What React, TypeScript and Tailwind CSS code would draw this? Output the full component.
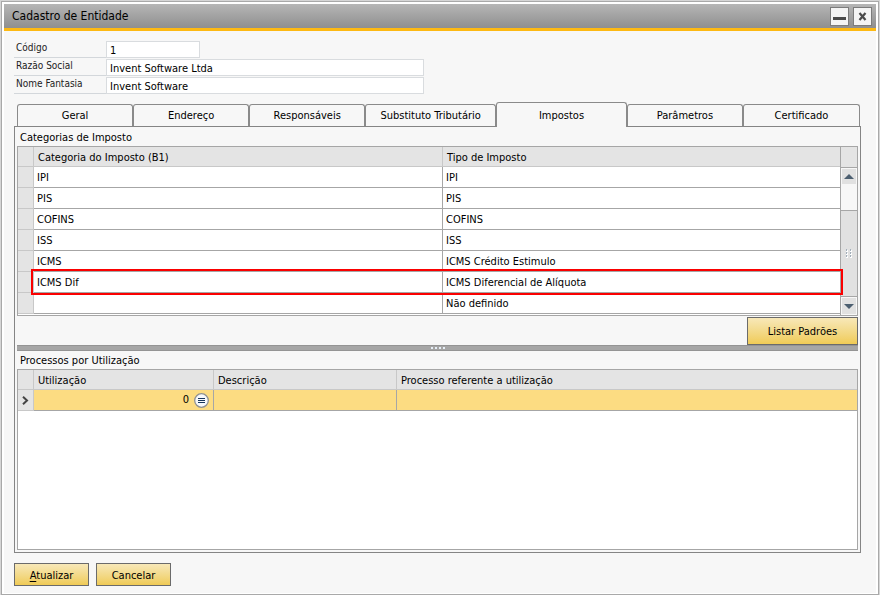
import React, { useState } from 'react';
import clsx from 'clsx';

const tabs = [
  { id: 'geral', label: 'Geral', width: 'grow-[116]' },
  { id: 'endereco', label: 'Endereço', width: 'grow-[116]' },
  { id: 'responsaveis', label: 'Responsáveis', width: 'grow-[116]' },
  { id: 'substituto', label: 'Substituto Tributário', width: 'grow-[131]' },
  { id: 'impostos', label: 'Impostos', width: 'grow-[131]' },
  { id: 'parametros', label: 'Parâmetros', width: 'grow-[116]' },
  { id: 'certificado', label: 'Certificado', width: 'grow-[117]' },
];

const categorias = [
  { categoria: 'IPI', tipo: 'IPI' },
  { categoria: 'PIS', tipo: 'PIS' },
  { categoria: 'COFINS', tipo: 'COFINS' },
  { categoria: 'ISS', tipo: 'ISS' },
  { categoria: 'ICMS', tipo: 'ICMS Crédito Estimulo' },
  { categoria: 'ICMS Dif', tipo: 'ICMS Diferencial de Alíquota', destaque: true },
  { categoria: '', tipo: 'Não definido' },
];

const campos = [
  { id: 'codigo', label: 'Código', value: '1', width: 'w-[94px]' },
  { id: 'razao', label: 'Razão Social', value: 'Invent Software Ltda', width: 'w-[318px]' },
  { id: 'fantasia', label: 'Nome Fantasia', value: 'Invent Software', width: 'w-[318px]' },
];

const goldButton =
  'border border-[#6b6b6b] bg-gradient-to-b from-[#f8e8b8] via-[#f3da8a] to-[#f0cb55] text-center';
const headCell = 'h-5 border-b border-[#c8c8c8] bg-[#e4e4e4] px-1 pt-0.5 pb-0 text-left font-normal';

function ScrollBar() {
  return (
    <div className="flex w-[17px] shrink-0 flex-col border-l border-[#a6a6a6] bg-[#e4e4e4]">
      <div className="h-[21px] border-b border-[#a6a6a6]" />
      <button aria-label="Rolar para cima" className="flex h-[17px] items-center justify-center border border-[#f7f7f7] bg-[#e1e1e1]">
        <svg width="10" height="5" viewBox="0 0 10 5"><path d="M5 0l5 5H0z" fill="#4c5f70" /></svg>
      </button>
      <div className="h-[25px] bg-[#f7f7f7]" />
      <div className="flex flex-1 items-center justify-center border-y border-[#a6a6a6] bg-[#e1e1e1]">
        <svg width="8" height="9" viewBox="0 0 8 9" shapeRendering="crispEdges">
          <path d="M1 1h2v2H1zM5 1h2v2H5zM1 4h2v2H1zM5 4h2v2H5zM1 7h2v2H1zM5 7h2v2H5z" fill="#fff" />
          <path d="M1 0h1v2H1zM5 0h1v2H5zM1 3h1v2H1zM5 3h1v2H5zM1 6h1v2H1zM5 6h1v2H5z" fill="#a3afba" />
        </svg>
      </div>
      <button aria-label="Rolar para baixo" className="flex h-[18px] items-center justify-center border border-[#f7f7f7] bg-[#e1e1e1]">
        <svg width="10" height="5" viewBox="0 0 10 5"><path d="M0 0h10L5 5z" fill="#4c5f70" /></svg>
      </button>
    </div>
  );
}

export default function App() {
  const [activeTab, setActiveTab] = useState('impostos');

  return (
    <div className="min-h-screen bg-[#d6d6d6] pt-px pr-px pl-px flex font-['DejaVu_Sans_Condensed','Noto_Sans',sans-serif] text-[11px] leading-4 text-black">
      <div className="flex flex-1 flex-col border border-[#a9a9a9] bg-white p-0.5 pb-px">
        {/* Title bar */}
        <header className="flex h-[27px] shrink-0 items-center justify-between border-b-3 border-[#fdb913] bg-gradient-to-b from-[#b6b6b6] to-[#8f8f8f] pr-1 pl-2">
          <h1 className="text-xs">Cadastro de Entidade</h1>
          <div className="flex gap-1">
            <button aria-label="Minimizar" className="flex size-[19px] items-center justify-center border border-[#7c7c7c] bg-[#f4f4f4]">
              <svg width="13" height="13" viewBox="0 0 13 13"><path d="M0 7h13v3H0z" fill="#4a4a4a" /></svg>
            </button>
            <button aria-label="Fechar" className="flex size-[19px] items-center justify-center border border-[#7c7c7c] bg-[#f4f4f4]">
              <svg width="9" height="9" viewBox="0 0 9 9"><path d="M1.5 1l6 7M7.5 1l-6 7" stroke="#4a4a4a" strokeWidth="2.2" /></svg>
            </button>
          </div>
        </header>

        <main className="flex flex-1 flex-col bg-[#f7f7f7] pt-2.5 pr-[15px] pb-[7px] pl-2.5">
          {/* Form fields */}
          <div className="flex flex-col gap-px">
            {campos.map((campo) => (
              <div key={campo.id} className="flex h-[17px]">
                <label htmlFor={campo.id} className="w-[92px] border-b border-[#d3d7db] pl-0.5 text-[10px] leading-[14px] text-[#222]">
                  {campo.label}
                </label>
                <input id={campo.id} defaultValue={campo.value} className={clsx('border border-[#d9dcdf] bg-white px-[3px] pt-0.5 outline-none', campo.width)} />
              </div>
            ))}
          </div>

          {/* Tabs */}
          <div role="tablist" className="mt-2 flex h-6 items-end pr-px pl-[3px]">
            {tabs.map((tab) => (
              <button
                key={tab.id}
                role="tab"
                aria-selected={activeTab === tab.id}
                onClick={() => setActiveTab(tab.id)}
                className={clsx(
                  'basis-0 rounded-t-[3px] border border-b-0 border-[#8a8a8a] bg-[#f7f7f7]',
                  tab.width,
                  activeTab === tab.id ? 'relative z-10 -mb-px h-[25px] pt-0.5' : 'h-[22px]'
                )}
              >
                {tab.label}
              </button>
            ))}
          </div>

          <section className="flex flex-1 flex-col border border-[#858585] pr-0.5 pb-0.5 pl-0.5">
            <h2 className="h-[19px] pt-[3px] pl-[3px]">Categorias de Imposto</h2>
            <div className="flex border border-[#a6a6a6] bg-white">
              <div className="flex-1 pb-px">
                <table className="w-full table-fixed border-separate border-spacing-0">
                  <colgroup>
                    <col className="w-4" />
                    <col className="w-[409px]" />
                    <col />
                  </colgroup>
                  <thead>
                    <tr>
                      <th className={clsx(headCell, 'border-r')} />
                      <th className={clsx(headCell, 'border-r')}>Categoria do Imposto (B1)</th>
                      <th className={headCell}>Tipo de Imposto</th>
                    </tr>
                  </thead>
                  <tbody>
                    {categorias.map((item) => (
                      <tr key={item.tipo} className="relative h-[21px]">
                        <td className="border-r border-b border-[#c8c8c8] bg-[#e4e4e4] p-0">
                          {item.destaque && (
                            <span className="pointer-events-none absolute -top-[3px] -right-[3px] -bottom-0.5 left-[13px] z-10 border-2 border-[#fa0000]" />
                          )}
                        </td>
                        <td className="border-r border-b border-[#a6a6a6] px-[3px] pt-0.5 pb-0">{item.categoria}</td>
                        <td className="border-b border-[#a6a6a6] px-[3px] pt-0.5 pb-0">{item.tipo}</td>
                      </tr>
                    ))}
                  </tbody>
                </table>
              </div>
              <ScrollBar />
            </div>

            <button className={clsx(goldButton, 'mt-px h-7 w-[111px] self-end pt-px')}>Listar Padrões</button>

            {/* Splitter */}
            <div className="flex h-1.5 shrink-0 items-center justify-center gap-0.5 border-y border-[#949494] bg-[#a6a6a6]">
              <i className="size-0.5 bg-[#e8f0f8]" />
              <i className="size-0.5 bg-[#e8f0f8]" />
              <i className="size-0.5 bg-[#e8f0f8]" />
              <i className="size-0.5 bg-[#e8f0f8]" />
            </div>

            <h2 className="h-[18px] pt-0.5 pl-[3px]">Processos por Utilização</h2>
            <div className="flex-1 border border-[#a6a6a6] bg-white">
              <table className="w-full table-fixed border-separate border-spacing-0">
                <colgroup>
                  <col className="w-4" />
                  <col className="w-[180px]" />
                  <col className="w-[183px]" />
                  <col />
                </colgroup>
                <thead>
                  <tr>
                    <th className={clsx(headCell, 'border-r')} />
                    <th className={clsx(headCell, 'border-r')}>Utilização</th>
                    <th className={clsx(headCell, 'border-r')}>Descrição</th>
                    <th className={headCell}>Processo referente a utilização</th>
                  </tr>
                </thead>
                <tbody>
                  <tr className="h-[21px] bg-[#fcdc82]">
                    <td className="border-r border-b border-[#c8c8c8] bg-[#e4e4e4] p-0">
                      <svg className="mx-auto" width="7" height="9" viewBox="0 0 7 9"><path d="M1 .8l4 3.7-4 3.7" fill="none" stroke="#444" strokeWidth="2" /></svg>
                    </td>
                    <td className="border-r border-b border-[#a6a6a6] py-0 pr-1">
                      <div className="flex items-center justify-end gap-[5px]">
                        0
                        <button aria-label="Selecionar utilização">
                          <svg width="15" height="15" viewBox="0 0 15 15">
                            <circle cx="7.5" cy="7.5" r="6.8" fill="#f7f9fb" stroke="#8f9294" strokeWidth="1.3" />
                            <path d="M4 5h7v1H4zM4 7h7v1H4zM4 9h7v1H4z" fill="#17375e" />
                          </svg>
                        </button>
                      </div>
                    </td>
                    <td className="border-r border-b border-[#a6a6a6]" />
                    <td className="border-b border-[#a6a6a6]" />
                  </tr>
                </tbody>
              </table>
            </div>
          </section>

          <footer className="mt-2.5 flex gap-[7px]">
            <button className={clsx(goldButton, 'h-[23px] w-[75px] pt-0.5')}>
              <span className="underline underline-offset-2">A</span>tualizar
            </button>
            <button className={clsx(goldButton, 'h-[23px] w-[75px] pt-0.5')}>Cancelar</button>
          </footer>
        </main>
      </div>
    </div>
  );
}
